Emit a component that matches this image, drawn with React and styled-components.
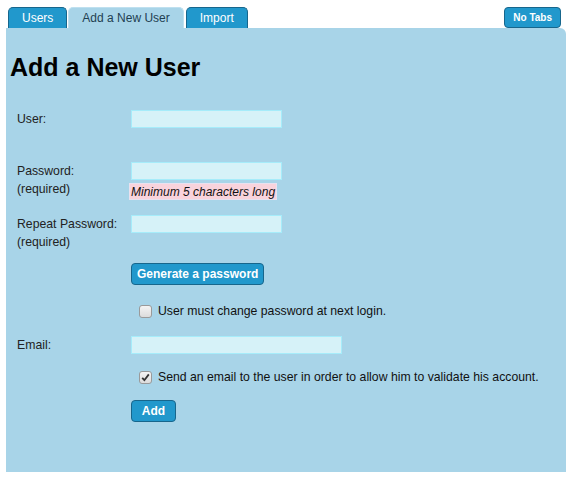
import React, { useState } from 'react'
import styled, { createGlobalStyle } from 'styled-components'

const GlobalStyle = createGlobalStyle`
    html, body {
        margin: 0;
        padding: 0;
        background: #fff;
    }
    body {
        font-family: 'Liberation Sans', Arial, sans-serif;
        font-size: 12.25px;
        color: #222;
    }
`

const tabs = ['Users', 'Add a New User', 'Import']

const App = () => {
    const [active, setActive] = useState(1)
    const [mustChange, setMustChange] = useState(false)
    const [sendMail, setSendMail] = useState(true)

    return (
        <Page>
            <GlobalStyle />
            <TabBar>
                {tabs.map((tab, index) => (
                    <Tab key={tab} $active={index === active} onClick={() => setActive(index)}>
                        {tab}
                    </Tab>
                ))}
                <NoTabs>No Tabs</NoTabs>
            </TabBar>

            <Panel>
                <Heading>Add a New User</Heading>

                <Row $top={29}>
                    <Label>User:</Label>
                    <Field><Input /></Field>
                </Row>

                <Row $top={34}>
                    <Label>Password:<br />(required)</Label>
                    <Field>
                        <Input type="password" />
                        <Hint>Minimum 5 characters long</Hint>
                    </Field>
                </Row>

                <Row $top={15}>
                    <Label>Repeat Password:<br />(required)</Label>
                    <Field><Input type="password" /></Field>
                </Row>

                <Row $top={12}>
                    <span />
                    <Field><Button>Generate a password</Button></Field>
                </Row>

                <Row $top={17}>
                    <span />
                    <Check checked={mustChange} onToggle={() => setMustChange(!mustChange)}>
                        User must change password at next login.
                    </Check>
                </Row>

                <Row $top={16}>
                    <Label>Email:</Label>
                    <Field><Input $wide type="email" /></Field>
                </Row>

                <Row $top={14}>
                    <span />
                    <Check checked={sendMail} onToggle={() => setSendMail(!sendMail)}>
                        Send an email to the user in order to allow him to validate his account.
                    </Check>
                </Row>

                <Row $top={14}>
                    <span />
                    <Field><Button $min={45}>Add</Button></Field>
                </Row>
            </Panel>
        </Page>
    )
}

const Check = ({ checked, onToggle, children }) => (
    <CheckLine onClick={onToggle}>
        <Box>
            {checked && (
                <svg width="9" height="9" viewBox="0 0 9 9">
                    <path d="M1.2 4.8 L3.4 7.2 L7.8 1.4" fill="none" stroke="#333" strokeWidth="1.8" />
                </svg>
            )}
        </Box>
        {children}
    </CheckLine>
)

export default App


const Page = styled.div`
    padding: 7px 6px 8px 6px;
`

const TabBar = styled.div`
    display: flex;
    align-items: flex-end;
    padding: 0 5px 0 2px;
    height: 21px;
`

const Tab = styled.div`
    height: 20px;
    line-height: 20px;
    padding: 0 13px;
    margin-right: 1px;
    border: 1px solid ${p => p.$active ? '#bfe0ef' : '#17668c'};
    border-bottom: 0;
    border-radius: 5px 5px 0 0;
    background: ${p => p.$active ? '#a8d4e8' : '#2198cc'};
    color: ${p => p.$active ? '#1f3f52' : '#fff'};
    font-size: 12px;
    cursor: pointer;

    &:nth-child(2) {
        margin-right: 2px;
    }
`

const NoTabs = styled.button`
    margin-left: auto;
    align-self: flex-start;
    height: 21px;
    padding: 0 8px;
    border: 1px solid #17668c;
    border-radius: 4px;
    background: #2198cc;
    color: #fff;
    font-family: inherit;
    font-size: 10px;
    font-weight: bold;
`

const Panel = styled.div`
    height: 444px;
    box-sizing: border-box;
    padding: 25px 0 0 4px;
    background: #a8d4e8;
    border-radius: 0 6px 0 0;
`

const Heading = styled.h1`
    margin: 0;
    font-size: 25px;
    line-height: 28px;
    font-weight: bold;
    color: #000;
`

const Row = styled.div`
    display: grid;
    grid-template-columns: 114px 1fr;
    padding-left: 7px;
    margin-top: ${p => p.$top}px;
`

const Label = styled.div`
    line-height: 18px;
`

const Field = styled.div`
    display: flex;
    flex-direction: column;
    align-items: flex-start;
`

const Input = styled.input`
    width: ${p => p.$wide ? 211 : 151}px;
    height: 18px;
    box-sizing: border-box;
    margin: 0;
    border: 1px solid #a6ecfa;
    background: #d6f2f8;
    font-family: inherit;
    font-size: 12px;
    outline: none;
`

const Hint = styled.div`
    margin: 3px 0 0 -2px;
    padding: 0 1px;
    height: 17px;
    line-height: 17px;
    background: #f9d3dc;
    border: 1px solid #e9e1ef;
    box-sizing: border-box;
    font-size: 12px;
    font-style: italic;
    color: #111;
    white-space: nowrap;
`

const Button = styled.button`
    height: 22px;
    min-width: ${p => p.$min || 0}px;
    padding: 0 5px;
    border: 1px solid #17668c;
    border-radius: 4px;
    background: #2198cc;
    color: #fff;
    font-family: inherit;
    font-size: 12px;
    font-weight: bold;
    cursor: pointer;
`

const CheckLine = styled.label`
    display: flex;
    align-items: center;
    gap: 6px;
    height: 18px;
    padding-left: 8px;
    color: #111;
    cursor: pointer;
    white-space: nowrap;
`

const Box = styled.span`
    display: flex;
    align-items: center;
    justify-content: center;
    width: 13px;
    height: 13px;
    box-sizing: border-box;
    border: 1px solid #9a9a9a;
    border-radius: 3px;
    background: linear-gradient(#f4f4f4, #dcdcdc);
`
